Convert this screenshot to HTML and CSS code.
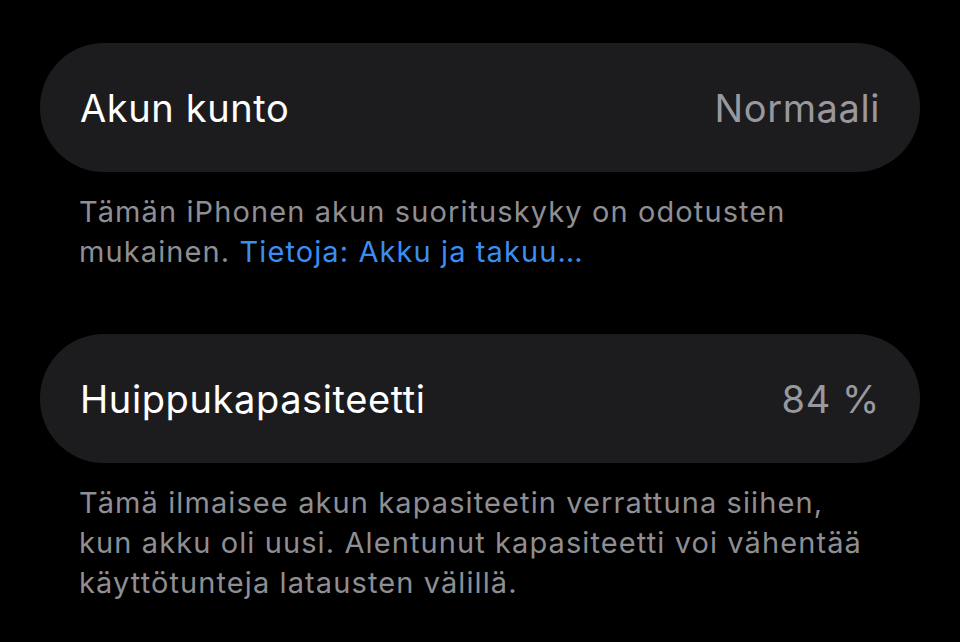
FILE: index.html
```html
<!DOCTYPE html>
<html lang="fi">
<head>
    <meta charset="UTF-8">
    <meta name="viewport" content="width=device-width, initial-scale=1.0">
    <title>Akun kunto</title>
    <link rel="stylesheet" href="styles.css">
</head>
<body>
    <div class="wrapper">
        <div class="group">
            <div class="cell">
                <span class="label">Akun kunto</span>
                <span class="value">Normaali</span>
            </div>
            <p class="footer">Tämän iPhonen akun suorituskyky on odotusten mukainen. <a href="#">Tietoja: Akku ja takuu…</a></p>
        </div>
        <div class="group">
            <div class="cell">
                <span class="label">Huippukapasiteetti</span>
                <span class="value">84 %</span>
            </div>
            <p class="footer">Tämä ilmaisee akun kapasiteetin verrattuna siihen, kun akku oli uusi. Alentunut kapasiteetti voi vähentää käyttötunteja latausten välillä.</p>
        </div>
    </div>
</body>
</html>
```

FILE: styles.css
```css
html,
body,
p {
    margin: 0;
    padding: 0;
}
body {
    background-color: #000;
    font-family: Inter, "Noto Sans", sans-serif;
    -webkit-font-smoothing: antialiased;
}
.wrapper {
    padding: 43px 40px 0;
    display: flex;
    flex-direction: column;
    gap: 62px;
}
.cell {
    height: 129px;
    border-radius: 64px;
    background-color: #1c1c1e;
    display: flex;
    align-items: center;
    justify-content: space-between;
    padding: 0 40px;
    font-size: 38px;
    letter-spacing: 0.6px;
}
.label {
    color: #fff;
}
.value {
    color: #98989e;
}
.footer {
    margin-top: 20px;
    padding: 0 0 0 39px;
    width: 796px;
    color: #8e8e93;
    font-size: 29px;
    letter-spacing: 1.1px;
    line-height: 40px;
}
.footer a {
    color: #3a8ef2;
    text-decoration: none;
}
```
